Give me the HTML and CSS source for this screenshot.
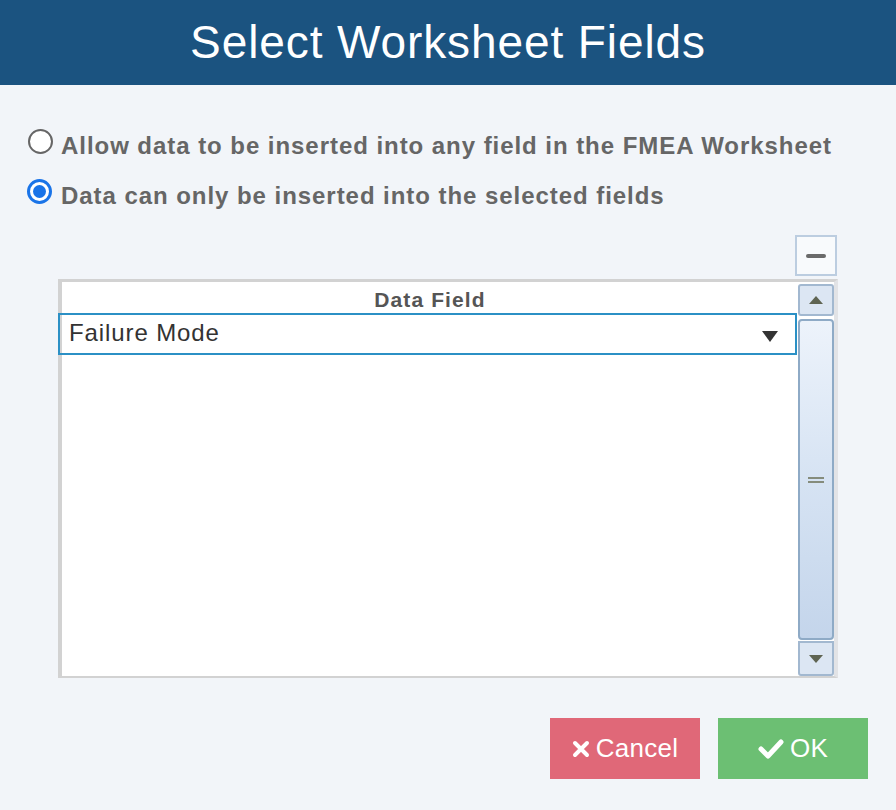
FILE: index.html
```html
<!DOCTYPE html>
<html>
<head>
<meta charset="utf-8">
<link rel="stylesheet" href="styles.css">
</head>
<body>
<div class="dialog">
  <div class="header">Select Worksheet Fields</div>
  <div class="options">
    <label class="option">
      <span class="radio"></span>
      <span class="option-text">Allow data to be inserted into any field in the FMEA Worksheet</span>
    </label>
    <label class="option">
      <span class="radio checked"><span class="dot"></span></span>
      <span class="option-text">Data can only be inserted into the selected fields</span>
    </label>
  </div>
  <div class="toolbar">
    <button class="minus-btn"><span class="minus-bar"></span></button>
  </div>
  <div class="grid">
    <div class="grid-main">
      <div class="grid-head">Data Field</div>
      <div class="grid-row">
        <span class="cell-text">Failure Mode</span>
        <svg class="caret" width="16" height="11" viewBox="0 0 16 11"><polygon points="0,0 16,0 8,11" fill="#333"/></svg>
      </div>
    </div>
    <div class="scrollbar">
      <div class="sb-btn sb-up">
        <svg width="14" height="8" viewBox="0 0 14 8"><polygon points="7,0 14,8 0,8" fill="#5f6452"/></svg>
      </div>
      <div class="sb-thumb">
        <span class="grip"></span>
        <span class="grip"></span>
      </div>
      <div class="sb-btn sb-down">
        <svg width="14" height="8" viewBox="0 0 14 8"><polygon points="0,0 14,0 7,8" fill="#5f6452"/></svg>
      </div>
    </div>
  </div>
  <div class="actions">
    <button class="btn btn-cancel">
      <svg width="18" height="18" viewBox="0 0 18 18"><path d="M3 3 L15 15 M15 3 L3 15" stroke="#fff" stroke-width="4" stroke-linecap="round"/></svg>
      <span>Cancel</span>
    </button>
    <button class="btn btn-ok">
      <svg width="26" height="20" viewBox="0 0 26 20"><path d="M3 10 L10 17 L23 3" stroke="#fff" stroke-width="5" fill="none" stroke-linecap="round" stroke-linejoin="round"/></svg>
      <span>OK</span>
    </button>
  </div>
</div>
</body>
</html>
```
FILE: styles.css
```css
html, body {
  margin: 0;
  padding: 0;
}
body {
  width: 896px;
  height: 810px;
  background: #f2f5f9;
  font-family: "Liberation Sans", Arial, sans-serif;
  overflow: hidden;
}
.dialog {
  display: flex;
  flex-direction: column;
}
.header {
  height: 85px;
  background: #1b5380;
  color: #fff;
  font-size: 46px;
  letter-spacing: 0.9px;
  display: flex;
  align-items: center;
  justify-content: center;
  padding-bottom: 1px;
  box-sizing: border-box;
}
.options {
  padding: 31px 0 0 28px;
  display: flex;
  flex-direction: column;
}
.option {
  height: 50px;
  display: flex;
  align-items: center;
  gap: 8px;
}
.radio {
  width: 21px;
  height: 21px;
  border: 2px solid #666;
  border-radius: 50%;
  background: #fff;
  box-sizing: content-box;
  flex: none;
}
.radio.checked {
  width: 19px;
  height: 19px;
  border: 3px solid #1a74e8;
  background: #fff;
  display: flex;
  align-items: center;
  justify-content: center;
  margin-left: -1px;
  margin-right: 1px;
}
.dot {
  width: 13px;
  height: 13px;
  border-radius: 50%;
  background: #1a74e8;
}
.option-text {
  font-size: 24px;
  letter-spacing: 0.95px;
  font-weight: bold;
  color: #666;
  margin-top: 9px;
}
.toolbar {
  display: flex;
  justify-content: flex-end;
  padding-right: 59px;
  margin-top: 19px;
}
.minus-btn {
  width: 42px;
  height: 41px;
  border: 2px solid #bccde0;
  background: #f8fafc;
  display: flex;
  align-items: center;
  justify-content: center;
  padding: 0;
}
.minus-bar {
  width: 20px;
  height: 4px;
  border-radius: 2px;
  background: #6a6a6a;
}
.grid {
  margin: 3px 0 0 58px;
  width: 780px;
  height: 399px;
  box-sizing: border-box;
  border-top: 3px solid #d2d2d2;
  border-left: 4px solid #d2d2d2;
  border-bottom: 2px solid #d2d2d2;
  border-right: 4px solid #e2e3e6;
  background: #fff;
  display: flex;
}
.grid-main {
  flex: 1;
  display: flex;
  flex-direction: column;
}
.grid-head {
  height: 31px;
  display: flex;
  align-items: center;
  justify-content: center;
  font-size: 21px;
  letter-spacing: 1.1px;
  font-weight: bold;
  color: #555;
  padding-top: 4px;
  box-sizing: border-box;
}
.grid-row {
  height: 42px;
  margin-left: -4px;
  margin-right: 1px;
  border: 2px solid #2b90c5;
  box-sizing: border-box;
  display: flex;
  align-items: center;
  justify-content: space-between;
  padding: 0 17px 0 9px;
}
.cell-text {
  font-size: 24px;
  letter-spacing: 0.9px;
  color: #333;
  margin-top: -3px;
}
.caret {
  margin-top: 4px;
}
.scrollbar {
  width: 36px;
  display: flex;
  flex-direction: column;
  padding-top: 2px;
  gap: 3px;
  background: #fff;
}
.sb-btn {
  box-sizing: border-box;
  background: #dce6f3;
  border: 2px solid #a2b8d0;
  border-radius: 3px;
  display: flex;
  align-items: center;
  justify-content: center;
}
.sb-up {
  height: 32px;
}
.sb-down {
  height: 35px;
  margin-top: -2px;
  border-radius: 0 0 3px 3px;
}
.sb-thumb {
  height: 321px;
  box-sizing: border-box;
  border: 2px solid #8eaac6;
  border-radius: 4px;
  background: linear-gradient(to bottom, #edf3fb 0%, #d6e3f3 50%, #c4d5eb 100%);
  display: flex;
  flex-direction: column;
  align-items: center;
  justify-content: center;
  gap: 2px;
  padding-top: 1px;
}
.grip {
  width: 16px;
  height: 2px;
  background: #858c7c;
}
.actions {
  display: flex;
  justify-content: flex-end;
  gap: 18px;
  padding-right: 28px;
  margin-top: 40px;
}
.btn {
  width: 150px;
  height: 61px;
  border: none;
  color: #fff;
  font-family: "Liberation Sans", Arial, sans-serif;
  font-size: 26px;
  letter-spacing: 0.3px;
  display: flex;
  align-items: center;
  justify-content: center;
  gap: 6px;
  padding: 0;
}
.btn-cancel {
  background: #e06878;
}
.btn-ok {
  background: #6cbf73;
}
```
